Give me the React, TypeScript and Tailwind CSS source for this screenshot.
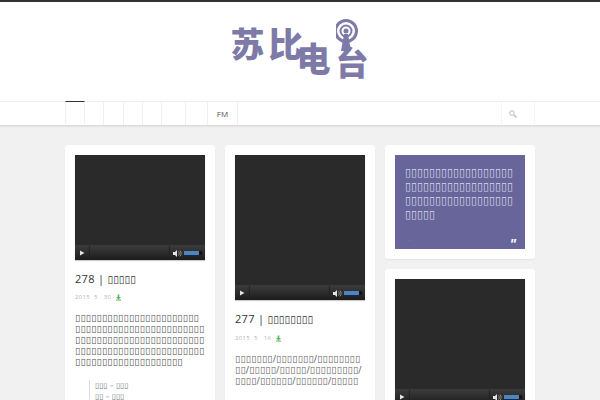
const tofu = (n: number) => '\u25AF'.repeat(n)

const dejavu = "font-['DejaVu_Sans',sans-serif]"

function Player() {
  return (
    <div className="flex h-[15px] w-[130px] items-center border-t border-[#3a3a3a] bg-gradient-to-b from-[#3b3b3b] to-[#1c1c1c]">
      <div className="flex h-full w-[15px] items-center justify-center border-r border-[#222]">
        <svg width="6" height="6" viewBox="0 0 6 6"><path d="M1 0.5 5.500 3 1 5.500z" fill="#e4e4e4" /></svg>
      </div>
      <div className="h-full flex-1" />
      <div className="flex h-full w-[15px] items-center justify-center border-l border-[#222]">
        <svg width="9" height="7" viewBox="0 0 9 7"><path d="M0 2h2l2-2v7L2 5H0z" fill="#e4e4e4" /><path d="M5.500 1.500c1 1 1 3 0 4M7 .6c1.500 1.600 1.500 4.200 0 5.800" stroke="#bbb" strokeWidth=".7" fill="none" /></svg>
      </div>
      <div className="mr-[3px] h-[4px] w-[18px] rounded-[1px] bg-[#111]">
        <div className="h-full w-[15px] bg-[#4a86c5]" />
      </div>
    </div>
  )
}

function Video({ height }: { height: string }) {
  return (
    <div className="shadow-[0_1px_1px_rgba(0,0,0,0.2)]">
      <div className={`${height} w-[130px] bg-[#2a2a2a]`} />
      <Player />
    </div>
  )
}

function PostMeta({ month, day }: { month: string; day: string }) {
  return (
    <div className="flex items-center text-[6px] leading-[10px] tracking-[0.3px] text-[#b5b5b5]">
      <span>2015</span>
      <span className="ml-[4px]">{month}</span>
      <span className="ml-[6px]">{day}</span>
      <span className="ml-[5px]">
        <svg width="5" height="7" viewBox="0 0 6 7"><path d="M2 0h2v3h2L3 6 0 3h2zM0 6h6v1H0z" fill="#5cb85c" /></svg>
      </span>
    </div>
  )
}

export default function App() {
  const cell = 'h-full border-r border-[#f0f0f0]'
  const card = 'rounded-[3px] bg-white p-[10px] shadow-[0_1px_1px_rgba(0,0,0,0.05)]'
  return (
    <div className="h-[400px] w-[600px] overflow-hidden bg-[#f1f1f1] font-['Open_Sans','Liberation_Sans',sans-serif] opacity-[0.995]">
      <div className="h-[2px] bg-[#333]" />
      <header className="flex h-[99px] justify-center bg-white">
        <div className="flex items-start font-['Noto_Sans_CJK_SC',sans-serif] text-[34px] font-black leading-[34px] text-[#7d7aa8]">
          <span className="mt-[24px]">苏</span>
          <span className="ml-[4px] mt-[24px]">比</span>
          <span className="-ml-[6px] mt-[39px]">电</span>
          <div className="ml-[5px] mt-[17px] flex flex-col items-start">
            <svg width="34" height="32" viewBox="0 0 34 32" className="-mb-[6px]">
              <circle cx="10" cy="12" r="10.500" fill="none" stroke="#7d7aa8" strokeWidth="3" />
              <circle cx="10" cy="12" r="5.500" fill="none" stroke="#7d7aa8" strokeWidth="2" />
              <circle cx="10" cy="12" r="2.500" fill="#7d7aa8" />
              <path d="M8 15h4l3 17H5z" fill="#7d7aa8" />
            </svg>
            <span className="text-[33px] leading-[33px]">台</span>
          </div>
        </div>
      </header>
      <nav className="flex h-[25px] border-y border-t-[#eeeeee] border-b-[#dddddd] bg-white pl-[65px] shadow-[0_1px_1px_rgba(0,0,0,0.05)]">
        <div className={`${cell} -mt-[1px] h-[25px] w-[20px] border-l border-t border-l-[#f0f0f0] border-t-[#333]`} />
        <div className={`${cell} w-[19px]`} />
        <div className={`${cell} w-[20px]`} />
        <div className={`${cell} w-[19px]`} />
        <div className={`${cell} w-[19px]`} />
        <div className={`${cell} w-[24px]`} />
        <div className={`${cell} w-[22px]`} />
        <div className={`${cell} flex w-[30px] items-center justify-center text-[8px] text-[#555]`}>FM</div>
        <div className="flex-1" />
        <div className="mr-[65px] flex h-full w-[34px] items-center justify-center border-x border-[#f6f6f6] pr-[10px]">
          <svg width="8" height="8" viewBox="0 0 8 8" fill="none" stroke="#bbb"><circle cx="3" cy="3" r="2.300" /><path d="M5 5l2.500 2.500" strokeWidth="1.500" /></svg>
        </div>
      </nav>
      <main className="flex items-start gap-[10px] pl-[65px] pt-[19px]">
        <article className={`${card} w-[150px]`}>
          <Video height="h-[90px]" />
          <h2 className="mt-[11px] text-[11px] leading-[16px] tracking-[0.3px] text-[#333]">278 | <span className={`${dejavu} text-[10.4px] tracking-normal`}>{tofu(5)}</span></h2>
          <div className="mt-[5px]"><PostMeta month="5" day="30" /></div>
          <p className={`${dejavu} mt-[10px] text-[9.5px] leading-[11px] tracking-[0.16px] text-[#555]`}>
            {tofu(23)}<br />
            {tofu(24)}<br />
            {tofu(24)}<br />
            {tofu(24)}<br />
            {tofu(20)}
          </p>
          <blockquote className={`${dejavu} ml-[14px] mt-[13px] border-l border-[#ddd] pl-[5px] text-[7.5px] leading-[11px] text-[#777]`}>
            <div>{tofu(3)} – {tofu(3)}</div>
            <div>{tofu(2)} – {tofu(3)}</div>
            <div>{tofu(3)} – {tofu(3)}</div>
          </blockquote>
        </article>
        <article className={`${card} w-[150px] pb-[30px]`}>
          <Video height="h-[130px]" />
          <h2 className="mt-[11px] text-[11px] font-medium leading-[16px] tracking-[0.3px] text-[#333]">277 | <span className={`${dejavu} text-[10.4px] font-normal tracking-normal`}>{tofu(8)}</span></h2>
          <div className="mt-[6px]"><PostMeta month="5" day="16" /></div>
          <p className={`${dejavu} mt-[10px] break-all text-[9.5px] leading-[11px] tracking-[0.16px] text-[#666]`}>
            {tofu(7)}/{tofu(7)}/{tofu(10)}/{tofu(5)}/{tofu(5)}/{tofu(9)}/{tofu(4)}/{tofu(6)}/{tofu(6)}/{tofu(5)}
          </p>
        </article>
        <div className="flex w-[150px] flex-col gap-[10px]">
          <article className={card}>
            <div className="flex h-[94px] flex-col justify-between bg-[#67659a] pb-[4px] pl-[10px] pr-[9px] pt-[11px] text-[#d4d4e6]">
              <p className={`${dejavu} break-all text-[10.9px] leading-[14px]`}>{tofu(59)}</p>
              <div className="flex items-center justify-between">
                <span className="pl-[2px] text-[7px] leading-[8px] text-[#8f8db8]">· ·</span>
                <span className="h-[8px] text-[14px] font-bold italic leading-[14px] text-white">"</span>
              </div>
            </div>
          </article>
          <article className={card}>
            <Video height="h-[110px]" />
          </article>
        </div>
      </main>
    </div>
  )
}
